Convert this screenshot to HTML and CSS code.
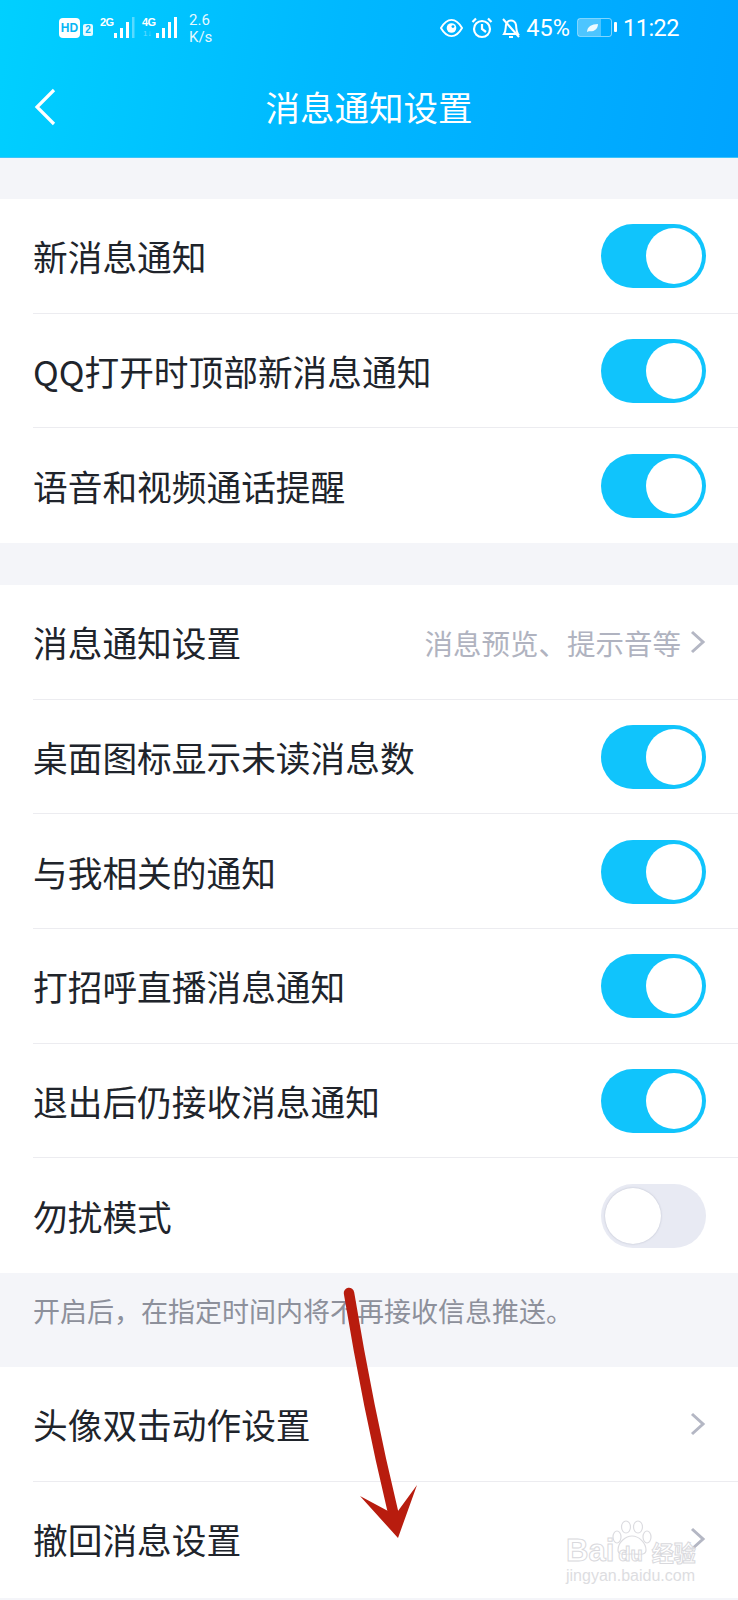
FILE: index.html
```html
<!DOCTYPE html>
<html lang="zh-CN">
<head>
    <meta charset="UTF-8">
    <meta name="viewport" content="width=device-width, initial-scale=1.0">
    <title>消息通知设置</title>
    <link rel="stylesheet" href="styles.css">
</head>
<body>
    <div class="page">
        <header class="app-header">
            <div class="status-bar">
                <div class="status-left">
                    <span class="hd-badge">HD</span>
                    <span class="sim-badge">2</span>
                    <span class="signal">
                        <span class="net-label">2G</span>
                        <svg class="bars" width="22" height="21" viewBox="0 0 22 21">
                            <rect x="1" y="16" width="3" height="5" fill="#fff"/>
                            <rect x="7" y="11" width="3" height="10" fill="#fff"/>
                            <rect x="13" y="5" width="3" height="16" fill="#fff"/>
                            <rect x="19" y="0" width="2.500" height="21" fill="#fff" opacity="0.35"/>
                        </svg>
                    </span>
                    <span class="signal">
                        <span class="net-label">4G</span>
                        <span class="net-sub">1↓</span>
                        <svg class="bars" width="22" height="21" viewBox="0 0 22 21">
                            <rect x="1" y="16" width="3" height="5" fill="#fff"/>
                            <rect x="7" y="11" width="3" height="10" fill="#fff"/>
                            <rect x="13" y="5" width="3" height="16" fill="#fff"/>
                            <rect x="19" y="0" width="3" height="21" fill="#fff"/>
                        </svg>
                    </span>
                    <span class="net-speed">2.6<br>K/s</span>
                </div>
                <div class="status-right">
                    <svg width="23" height="20" viewBox="0 0 24 20">
                        <path d="M1 10 C5 3 9 1.500 12 1.500 C15 1.500 19 3 23 10 C19 17 15 18.500 12 18.500 C9 18.500 5 17 1 10 Z" fill="none" stroke="#fff" stroke-width="2"/>
                        <circle cx="12" cy="10" r="5" fill="#fff"/>
                        <circle cx="13.500" cy="8.500" r="1.500" fill="#00b0ff"/>
                    </svg>
                    <svg width="22" height="22" viewBox="0 0 22 22">
                        <circle cx="11" cy="12" r="8" fill="none" stroke="#fff" stroke-width="2.200"/>
                        <path d="M11 7 V12 L15 15 M1.500 5 L5 1.500 M20.500 5 L17 1.500" fill="none" stroke="#fff" stroke-width="2.200"/>
                    </svg>
                    <svg width="20" height="22" viewBox="0 0 20 22">
                        <path d="M3 17 C5 14 4.500 11 5 8 C5.500 5 8 3.500 10 3.500 C12 3.500 14.500 5 15 8 C15.500 11 15 14 17 17 Z M8 20 H12" fill="none" stroke="#fff" stroke-width="2"/>
                        <path d="M2 2 L18 20" stroke="#fff" stroke-width="2"/>
                    </svg>
                    <span class="battery-pct">45%</span>
                    <span class="battery">
                        <span class="battery-fill">
                            <svg width="13" height="10" viewBox="0 0 14 11">
                                <path d="M1 10 C1 4 6 1 13 1 C13 7 8 10 3 9 Z" fill="#fff" opacity="0.9"/>
                            </svg>
                        </span>
                    </span>
                    <span class="clock">11:22</span>
                </div>
            </div>
            <div class="title-bar">
                <svg class="back-icon" width="24" height="38" viewBox="0 0 24 38">
                    <path d="M20 2 L3 19 L20 36" fill="none" stroke="#fff" stroke-width="3.200"/>
                </svg>
                <h1 class="page-title">消息通知设置</h1>
            </div>
        </header>

        <main>
            <section class="group">
                <div class="row"><span class="row-label">新消息通知</span><span class="switch on"></span></div>
                <div class="row"><span class="row-label">QQ打开时顶部新消息通知</span><span class="switch on"></span></div>
                <div class="row"><span class="row-label">语音和视频通话提醒</span><span class="switch on"></span></div>
            </section>

            <section class="group">
                <div class="row">
                    <span class="row-label">消息通知设置</span>
                    <span class="row-value">消息预览、提示音等
                        <svg class="chevron" width="16" height="24" viewBox="0 0 16 24"><path d="M2 2 L13 12 L2 22" fill="none" stroke="#b4b7c4" stroke-width="3"/></svg>
                    </span>
                </div>
                <div class="row"><span class="row-label">桌面图标显示未读消息数</span><span class="switch on"></span></div>
                <div class="row"><span class="row-label">与我相关的通知</span><span class="switch on"></span></div>
                <div class="row"><span class="row-label">打招呼直播消息通知</span><span class="switch on"></span></div>
                <div class="row"><span class="row-label">退出后仍接收消息通知</span><span class="switch on"></span></div>
                <div class="row"><span class="row-label">勿扰模式</span><span class="switch"></span></div>
            </section>

            <p class="hint">开启后，在指定时间内将不再接收信息推送。</p>

            <section class="group group-last">
                <div class="row">
                    <span class="row-label">头像双击动作设置</span>
                    <svg class="chevron" width="16" height="24" viewBox="0 0 16 24"><path d="M2 2 L13 12 L2 22" fill="none" stroke="#b4b7c4" stroke-width="3"/></svg>
                </div>
                <div class="row">
                    <span class="row-label">撤回消息设置</span>
                    <svg class="chevron" width="16" height="24" viewBox="0 0 16 24"><path d="M2 2 L13 12 L2 22" fill="none" stroke="#b4b7c4" stroke-width="3"/></svg>
                </div>
            </section>
        </main>

        <!-- red annotation arrow drawn over the screenshot -->
        <svg class="annotation" width="738" height="1600" viewBox="0 0 738 1600">
            <path d="M349 1293 Q368 1408 393 1512" fill="none" stroke="#b81c0e" stroke-width="10.500" stroke-linecap="round"/>
            <path d="M398 1538 L360 1496 L388 1511 L398 1511 L417 1485 Z" fill="#b81c0e"/>
        </svg>

        <div class="watermark">
            <svg class="paw" width="40" height="36" viewBox="0 0 40 36">
                <g fill="rgba(255,255,255,0.5)" stroke="#dcdce0" stroke-width="1.200">
                    <ellipse cx="5" cy="17" rx="4" ry="6"/>
                    <ellipse cx="14" cy="7" rx="4.500" ry="6"/>
                    <ellipse cx="26" cy="7" rx="4.500" ry="6"/>
                    <ellipse cx="35" cy="17" rx="4" ry="6"/>
                    <path d="M6 30 C6 22 14 16 20 16 C27 16 34 23 34 30 C34 36 26 34 20 34 C14 34 6 36 6 30 Z"/>
                </g>
            </svg>
            <div class="wm-brand">Bai<span class="wm-du">du</span><span class="wm-cn">经验</span></div>
            <div class="wm-url">jingyan.baidu.com</div>
        </div>
    </div>
</body>
</html>
```

FILE: styles.css
```css
* {
    box-sizing: border-box;
}

body {
    margin: 0;
    background: #f4f5f9;
    font-family: 'Noto Sans CJK SC', 'Noto Sans', sans-serif;
    color: #20242b;
}

.page {
    position: relative;
    width: 738px;
    height: 1600px;
    overflow: hidden;
}

/* header */
.app-header {
    height: 158px;
    background: linear-gradient(100deg, #00d0ff 0%, #00b8ff 45%, #00a4ff 100%);
    border-bottom: 1px solid #3cc4fb;
    color: #fff;
}

.status-bar {
    height: 55px;
    padding: 0 59px;
    display: flex;
    justify-content: space-between;
    align-items: center;
}

.status-left,
.status-right {
    display: flex;
    align-items: center;
}

.hd-badge {
    width: 21px;
    height: 20px;
    margin-top: 1px;
    border-radius: 4px;
    background: #fff;
    color: #06b6f5;
    font: bold 12px/20px 'Liberation Sans', sans-serif;
    text-align: center;
}

.sim-badge {
    width: 10px;
    height: 12px;
    margin: 5px 0 0 3px;
    border-radius: 2px;
    background: rgba(255, 255, 255, 0.9);
    color: #06b6f5;
    font: bold 10px/12px 'Liberation Sans', sans-serif;
    text-align: center;
}

.signal {
    position: relative;
    width: 35px;
    height: 24px;
    margin-left: 7px;
    margin-top: 3px;
}

.net-label {
    position: absolute;
    left: 0;
    top: 0;
    font: bold 11px/11px 'Liberation Sans', sans-serif;
    letter-spacing: -0.500px;
}

.net-sub {
    position: absolute;
    left: 1px;
    top: 13px;
    font: 8px/8px 'Liberation Sans', sans-serif;
    opacity: 0.4;
}

.bars {
    position: absolute;
    left: 13px;
    top: 0;
}

.net-speed {
    margin: 3px 0 0 12px;
    font: 15px/17.500px 'Roboto', sans-serif;
    opacity: 0.9;
}

.status-right svg {
    display: block;
}

.status-right > svg {
    margin-right: 8px;
}

.battery-pct {
    margin-left: -3px;
    font: 23.500px/26px 'Roboto', sans-serif;
}

.battery {
    position: relative;
    width: 35px;
    height: 19px;
    margin: 0 11px 0 7px;
    border: 1.500px solid rgba(255, 255, 255, 0.5);
    border-radius: 3px;
}

.battery::after {
    content: "";
    position: absolute;
    right: -6px;
    top: 3px;
    width: 3px;
    height: 10px;
    background: #fff;
    border-radius: 1px;
}

.battery-fill {
    display: flex;
    align-items: center;
    justify-content: flex-end;
    width: 23px;
    height: 100%;
    padding-right: 2px;
    background: rgba(255, 255, 255, 0.3);
}

.clock {
    font: 23.500px/28px 'Roboto', sans-serif;
    letter-spacing: -0.500px;
}

.title-bar {
    position: relative;
    height: 102px;
    display: flex;
    align-items: center;
    justify-content: center;
}

.back-icon {
    position: absolute;
    left: 34px;
    top: 33px;
}

.page-title {
    margin: 0;
    font-size: 34.500px;
    font-weight: 400;
    line-height: 48px;
}

/* list */
main {
    padding-top: 41px;
}

.group {
    margin-bottom: 42px;
    padding-left: 33px;
    background: #fff;
}

.group-last {
    margin-bottom: 0;
    height: 231px;
}

.row {
    height: 114.670px;
    padding: 1px 32px 0 0;
    display: flex;
    align-items: center;
    justify-content: space-between;
    border-bottom: 1.500px solid #ececf0;
}

.group .row:last-child {
    border-bottom: none;
}

.row-label {
    font-size: 34.700px;
    line-height: 48px;
}

.row-value {
    display: flex;
    align-items: center;
    gap: 9px;
    font-size: 28.500px;
    color: #b0b3c0;
}

.chevron {
    display: block;
}

/* toggles */
.switch {
    position: relative;
    width: 105px;
    height: 64px;
    border-radius: 32px;
    background: #e8eaf3;
}

.switch::after {
    content: "";
    position: absolute;
    left: 4px;
    top: 4px;
    width: 56px;
    height: 56px;
    border-radius: 50%;
    background: #fff;
    box-shadow: 0 0 2px rgba(150, 155, 175, 0.6);
}

.switch.on {
    background: #10c4fc;
}

.switch.on::after {
    left: 45px;
    box-shadow: none;
}

.hint {
    margin: -42px 0 0;
    height: 94px;
    padding: 18px 33px 0;
    font-size: 27px;
    line-height: 40px;
    color: #8d909b;
}

/* overlays */
.annotation {
    position: absolute;
    left: 0;
    top: 0;
}

.watermark {
    position: absolute;
    left: 566px;
    top: 1520px;
    width: 136px;
    color: rgba(255, 255, 255, 0.55);
}

.paw {
    position: absolute;
    left: 46px;
    top: 0;
}

.wm-brand {
    position: absolute;
    left: 0;
    top: 13px;
    white-space: nowrap;
    font: bold 31px/36px 'Liberation Sans', 'Noto Sans CJK SC', sans-serif;
    -webkit-text-stroke: 1px #d9d9dd;
}

.wm-du {
    margin-left: 4px;
    font-size: 20px;
}

.wm-cn {
    margin-left: 9px;
    font-size: 22px;
}

.wm-url {
    position: absolute;
    left: 0;
    top: 46px;
    white-space: nowrap;
    font: 16px/20px 'Liberation Sans', sans-serif;
    color: #dddde1;
}
```
